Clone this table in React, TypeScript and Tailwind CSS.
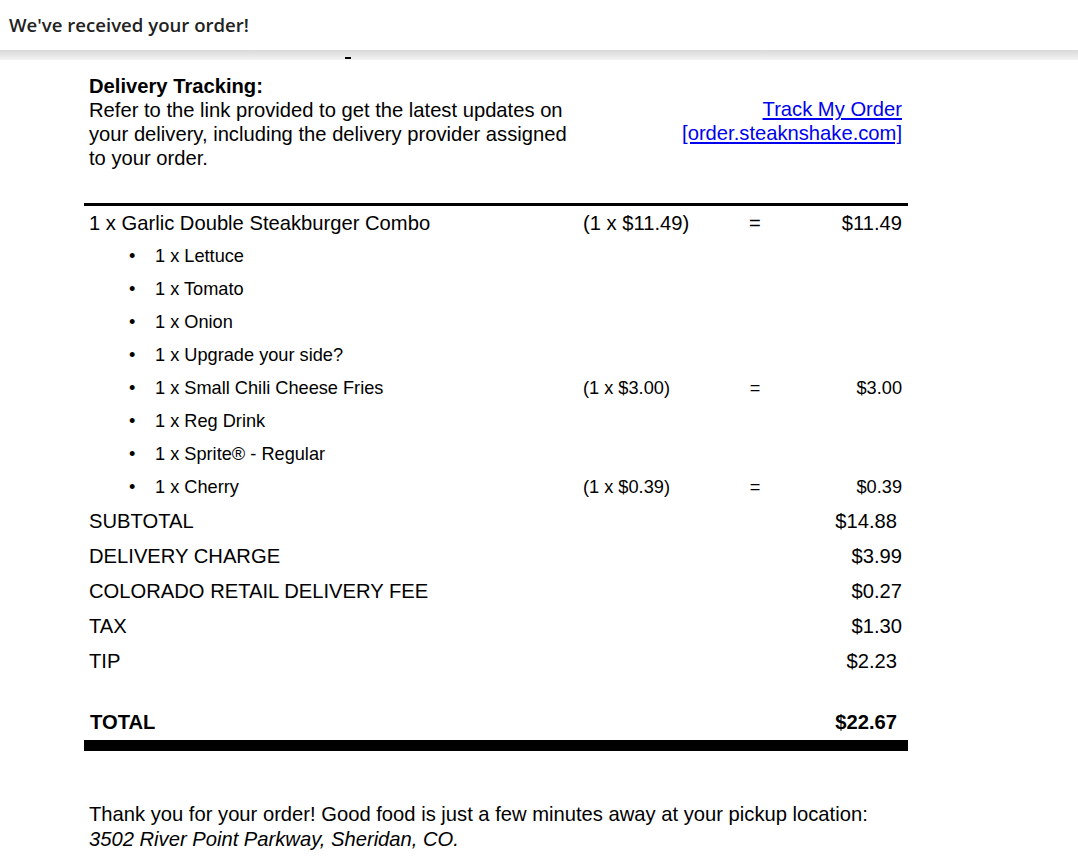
import React from 'react';

type SubItem = { name: string; price?: string; total?: string };

const subItems: SubItem[] = [
  { name: '1 x Lettuce' },
  { name: '1 x Tomato' },
  { name: '1 x Onion' },
  { name: '1 x Upgrade your side?' },
  { name: '1 x Small Chili Cheese Fries', price: '(1 x $3.00)', total: '$3.00' },
  { name: '1 x Reg Drink' },
  { name: '1 x Sprite® - Regular' },
  { name: '1 x Cherry', price: '(1 x $0.39)', total: '$0.39' },
];

const summary = [
  { label: 'SUBTOTAL', value: '$14.88', pad: 'pr-[11px]' },
  { label: 'DELIVERY CHARGE', value: '$3.99', pad: 'pr-[6px]' },
  { label: 'COLORADO RETAIL DELIVERY FEE', value: '$0.27', pad: 'pr-[6px]' },
  { label: 'TAX', value: '$1.30', pad: 'pr-[6px]' },
  { label: 'TIP', value: '$2.23', pad: 'pr-[11px]' },
];

export default function App() {
  return (
    <div className="min-h-[865px] bg-white text-black font-['Liberation_Sans',Arial,sans-serif]">
      <div className="flex h-[50px] items-center bg-white pl-[9px]">
        <h1 className="font-['Open_Sans',sans-serif] text-[18.6px] font-semibold text-[#222]">We've received your order!</h1>
      </div>
      <div className="h-[10px] bg-gradient-to-b from-[#d8d8d8] to-[#f4f4f4]">
        <div className="ml-[345px] h-[9px] w-[6px] border-b-2 border-black" />
      </div>

      <div className="ml-[84px] w-[824px]">
        {/* delivery tracking */}
        <div className="flex pt-[14px] text-[20.2px] leading-[24px]">
          <div className="w-[490px] pl-[5px]">
            <div className="font-bold">Delivery Tracking:</div>
            <p>Refer to the link provided to get the latest updates on your delivery, including the delivery provider assigned to your order.</p>
          </div>
          <div className="flex-1 pr-[6px] pt-[23px] text-right">
            <a href="#" className="text-[#0000ee] underline">
              Track My Order
              <br />
              [order.steaknshake.com]
            </a>
          </div>
        </div>

        {/* items */}
        <div className="mt-[33px] border-t-[3px] border-black">
          <div className="flex h-[33px] items-center pt-[2px] text-[20.2px]">
            <div className="w-[499px] pl-[5px]">1 x Garlic Double Steakburger Combo</div>
            <div className="w-[150px]">(1 x $11.49)</div>
            <div className="w-[44px] text-center">=</div>
            <div className="flex-1 pr-[6px] text-right">$11.49</div>
          </div>
          {subItems.map((item) => (
            <div key={item.name} className="flex h-[33px] items-center pt-[3px] text-[18.2px]">
              <div className="flex w-[499px] items-center pl-[45px]">
                <span className="w-[26px]">•</span>
                <span>{item.name}</span>
              </div>
              <div className="w-[150px]">{item.price}</div>
              <div className="w-[44px] text-center">{item.price ? '=' : ''}</div>
              <div className="flex-1 pr-[6px] text-right">{item.total}</div>
            </div>
          ))}
          {summary.map((row) => (
            <div key={row.label} className="flex h-[35px] items-center pt-[1px] text-[20.2px]">
              <div className="flex-1 pl-[5px]">{row.label}</div>
              <div className={`text-right ${row.pad}`}>{row.value}</div>
            </div>
          ))}
          <div className="mt-[26px] flex h-[35px] items-center pt-[1px] text-[20.2px] font-bold">
            <div className="flex-1 pl-[6px]">TOTAL</div>
            <div className="pr-[11px]">$22.67</div>
          </div>
          <div className="mt-[1px] h-[11px] bg-black" />
        </div>

        <div className="mt-[51px] pl-[5px] text-[20.2px] leading-[25px]">
          <p>Thank you for your order! Good food is just a few minutes away at your pickup location:</p>
          <p className="italic">3502 River Point Parkway, Sheridan, CO.</p>
        </div>
      </div>
    </div>
  );
}
